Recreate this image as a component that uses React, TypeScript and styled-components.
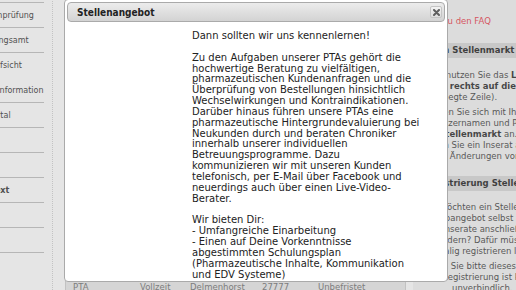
import React from "react";
import styled, { createGlobalStyle } from "styled-components";

const GlobalStyle = createGlobalStyle`
  html, body { margin: 0; padding: 0; }
  body {
    width: 516px;
    height: 290px;
    overflow: hidden;
    background: #ffffff;
    font-family: "DejaVu Sans", Verdana, sans-serif;
  }
  #root { width: 516px; height: 290px; overflow: hidden; position: relative; }
`;

/* ---------- page behind the dialog ---------- */

const Page = styled.div`
  display: flex;
  align-items: stretch;
  width: 720px;
  height: 360px;
  margin: -22px 0 0 -47px;
`;

const Sidebar = styled.nav`
  flex: none;
  width: 100px;
  box-sizing: border-box;
  padding: 0 8px 0 6.5px;
  background: #ffffff;
  border-right: 1px dotted #cfcfcf;
`;

const SideItem = styled.a<{ $active?: boolean; $plain?: boolean }>`
  display: flex;
  align-items: center;
  height: 25px;
  box-sizing: border-box;
  border-bottom: 1px solid ${(p) => (p.$plain ? "transparent" : "#bcbcbc")};
  font-size: 8px;
  font-weight: ${(p) => (p.$active ? 700 : 400)};
  color: #2a2a2a;
  white-space: nowrap;
  text-decoration: none;
`;

const Main = styled.main`
  flex: none;
  width: 360px;
  box-sizing: border-box;
  padding: 0 7px 0 12px;
  background: #ffffff;
  display: flex;
  flex-direction: column;
`;

const PageTitle = styled.h1`
  margin: 0;
  padding-top: 40px;
  height: 60px;
  box-sizing: border-box;
  font-size: 16px;
  line-height: 20px;
  color: #333;
`;

const Table = styled.div`
  margin-top: 22px;
  width: 341px;
  border-left: 1px solid #cdcdcd;
  border-right: 1px solid #cdcdcd;
  box-sizing: border-box;
`;

const Row = styled.div<{ $head?: boolean; $striped?: boolean }>`
  display: grid;
  grid-template-columns: 67px 50px 72px 56px 1fr;
  align-items: center;
  height: ${(p) => (p.$head ? 20 : 18)}px;
  background: ${(p) => (p.$head ? "#dedede" : p.$striped ? "#e8e8e8" : "#ffffff")};
  font-size: 8.5px;
  font-weight: ${(p) => (p.$head ? 700 : 400)};
  color: #6a6a6a;
  white-space: nowrap;
`;

const Cell = styled.span`
  padding-left: 7px;
  overflow: hidden;
`;

const Aside = styled.aside`
  flex: none;
  width: 230px;
  box-sizing: border-box;
  padding-top: 37.5px;
  background: #f3f3f3;
`;

const FaqLink = styled.a`
  display: block;
  padding: 0 10px;
  font-size: 8.5px;
  line-height: 11px;
  color: #e8303f;
  text-decoration: none;
  white-space: nowrap;
`;

const Box = styled.section`
  margin: 16.5px 0 14px;
  & + & { margin-top: 0; }
`;

const BoxHead = styled.h3`
  margin: 0;
  height: 15px;
  padding: 0 10px;
  background: #d6d6d6;
  font-size: 8.5px;
  line-height: 15px;
  font-weight: 700;
  color: #111;
  white-space: nowrap;
`;

const BoxBody = styled.div`
  padding: 11.5px 10px 0;
`;

const BoxText = styled.p`
  margin: 0 0 4px;
  font-size: 8.5px;
  line-height: 11px;
  color: #333;
  white-space: nowrap;
  &:last-child { margin-bottom: 0; }
  b { color: #1a1a1a; }
`;

const Continued = styled.span`
  display: inline-block;
  padding-left: 29px;
`;

/* ---------- modal ---------- */

const Overlay = styled.div`
  position: fixed;
  inset: 0;
  background: rgba(170, 170, 170, 0.3);
  z-index: 10;
`;

const Dialog = styled.div`
  position: fixed;
  left: 64px;
  top: -1px;
  width: 384px;
  height: 283px;
  box-sizing: border-box;
  padding: 2px 2px 0;
  border: 1px solid #aaaaaa;
  border-radius: 4px;
  background: #ffffff;
  z-index: 20;
  display: flex;
  flex-direction: column;
  overflow: hidden;
`;

const TitleBar = styled.div`
  position: relative;
  flex: none;
  height: 20px;
  box-sizing: border-box;
  padding: 0 9px;
  display: flex;
  align-items: center;
  border: 1px solid #aaaaaa;
  border-radius: 4px;
  background: linear-gradient(#ececec, #d3d3d3);
`;

const Title = styled.span`
  font-family: "DejaVu Sans Condensed", "DejaVu Sans", sans-serif;
  font-stretch: condensed;
  font-weight: 700;
  font-size: 10px;
  color: #222222;
`;

const CloseButton = styled.button`
  position: absolute;
  right: 2px;
  top: 3px;
  width: 12px;
  height: 12px;
  padding: 0;
  box-sizing: border-box;
  border: 1px solid #c4c4c4;
  border-radius: 2px;
  background: linear-gradient(#f3f3f3, #dddddd);
  display: flex;
  align-items: center;
  justify-content: center;
`;

const Content = styled.div`
  flex: 1;
  overflow: hidden;
  padding: 9px 10px 0 125px;
  font-family: "DejaVu Sans", Verdana, sans-serif;
  font-size: 10px;
  line-height: 10.85px;
  color: #222222;
`;

const Para = styled.p`
  margin: 0 0 10.85px;
  white-space: nowrap;
`;

const Lines = ({ lines }: { lines: string[] }) => (
  <Para>
    {lines.map((l, i) => (
      <React.Fragment key={i}>
        {l}
        {i < lines.length - 1 && <br />}
      </React.Fragment>
    ))}
  </Para>
);

const menu: { label: string; active?: boolean; plain?: boolean }[] = [
  { label: "Startseite" },
  { label: "Apothekenprüfung" },
  { label: "Vermessungsamt" },
  { label: "Medizinaufsicht", plain: true },
  { label: "Patienteninformation" },
  { label: "Stellenportal" },
  { label: "Blog" },
  { label: "Shop" },
  { label: "Stellentext", active: true },
  { label: "Links" },
  { label: "Team" },
];

const jobs: string[][] = [
  ["Apotheker/in", "Vollzeit", "Bremen", "28195", "Unbefristet"],
  ["PTA", "Teilzeit", "Oldenburg", "26122", "Befristet"],
  ["PKA", "Vollzeit", "Hamburg", "20095", "Unbefristet"],
  ["PTA", "Vollzeit", "Hannover", "30159", "Unbefristet"],
  ["Apotheker/in", "Teilzeit", "Verden", "27283", "Befristet"],
  ["PKA", "Minijob", "Syke", "28857", "Unbefristet"],
  ["PTA", "Teilzeit", "Achim", "28832", "Unbefristet"],
  ["Apotheker/in", "Vollzeit", "Stuhr", "28816", "Unbefristet"],
  ["PTA", "Vollzeit", "Cloppenburg", "49661", "Befristet"],
  ["PKA", "Teilzeit", "Vechta", "49377", "Unbefristet"],
  ["Apotheker/in", "Vollzeit", "Wildeshausen", "27793", "Unbefristet"],
  ["PTA", "Vollzeit", "Delmenhorst", "27777", "Unbefristet"],
  ["PKA", "Teilzeit", "Ganderkesee", "27777", "Befristet"],
  ["PTA", "Minijob", "Bremen", "28209", "Unbefristet"],
];

const XIcon = () => (
  <svg width="7" height="7" viewBox="0 0 7 7" aria-hidden="true">
    <path d="M1 1 L6 6 M6 1 L1 6" stroke="#5e5e5e" strokeWidth="2" strokeLinecap="round" />
  </svg>
);

export default function App() {
  return (
    <>
      <GlobalStyle />
      <Page>
        <Sidebar>
          {menu.map((m) => (
            <SideItem key={m.label} $active={m.active} $plain={m.plain}>
              {m.label}
            </SideItem>
          ))}
        </Sidebar>

        <Main>
          <PageTitle>Stellenmarkt</PageTitle>
          <Table>
            <Row $head>
              <Cell>Beruf</Cell>
              <Cell>Umfang</Cell>
              <Cell>Ort</Cell>
              <Cell>PLZ</Cell>
              <Cell>Vertrag</Cell>
            </Row>
            {jobs.map((j, i) => (
              <Row key={i} $striped={i % 2 === 1}>
                {j.map((c, k) => (
                  <Cell key={k}>{c}</Cell>
                ))}
              </Row>
            ))}
          </Table>
        </Main>

        <Aside>
          <FaqLink href="#">Link zu den FAQ</FaqLink>
          <Box>
            <BoxHead>Login Stellenmarkt</BoxHead>
            <BoxBody>
              <BoxText>
                Bitte nutzen Sie das <b>Login-Formular</b>
                <br />
                <b>oben rechts auf dieser Seite</b> (grau
                <br />
                unterlegte Zeile).
              </BoxText>
              <BoxText>
                Melden Sie sich mit Ihrem
                <br />
                Benutzernamen und Passwort
                <br />
                am <b>Stellenmarkt</b> an.
                <br />
                Legen Sie ein Inserat an
                <br />
                sowie Änderungen vornehmen.
              </BoxText>
            </BoxBody>
          </Box>
          <Box>
            <BoxHead>Registrierung Stellenmarkt</BoxHead>
            <BoxBody>
              <BoxText>
                Sie möchten ein Stellenangebot
                <br />
                Ihr Jobangebot selbst aufgeben und
                <br />
                Ihre Inserate anschließend
                <br />
                verändern? Dafür müssen Sie sich
                <br />
                einmalig registrieren lassen.
              </BoxText>
              <BoxText>
                Füllen Sie bitte dieses Formular aus.
                <br />
                Ihre Registrierung ist kostenlos
                <br />
                <Continued>unverbindlich.</Continued>
              </BoxText>
            </BoxBody>
          </Box>
        </Aside>
      </Page>

      <Overlay />

      <Dialog role="dialog" aria-label="Stellenangebot">
        <TitleBar>
          <Title>Stellenangebot</Title>
          <CloseButton aria-label="Schließen">
            <XIcon />
          </CloseButton>
        </TitleBar>
        <Content>
          <Lines lines={["Dann sollten wir uns kennenlernen!"]} />
          <Lines
            lines={[
              "Zu den Aufgaben unserer PTAs gehört die",
              "hochwertige Beratung zu vielfältigen,",
              "pharmazeutischen Kundenanfragen und die",
              "Überprüfung von Bestellungen hinsichtlich",
              "Wechselwirkungen und Kontraindikationen.",
              "Darüber hinaus führen unsere PTAs eine",
              "pharmazeutische Hintergrundevaluierung bei",
              "Neukunden durch und beraten Chroniker",
              "innerhalb unserer individuellen",
              "Betreuungsprogramme. Dazu",
              "kommunizieren wir mit unseren Kunden",
              "telefonisch, per E-Mail über Facebook und",
              "neuerdings auch über einen Live-Video-",
              "Berater.",
            ]}
          />
          <Lines
            lines={[
              "Wir bieten Dir:",
              "- Umfangreiche Einarbeitung",
              "- Einen auf Deine Vorkenntnisse",
              "abgestimmten Schulungsplan",
              "(Pharmazeutische Inhalte, Kommunikation",
              "und EDV Systeme)",
            ]}
          />
        </Content>
      </Dialog>
    </>
  );
}
